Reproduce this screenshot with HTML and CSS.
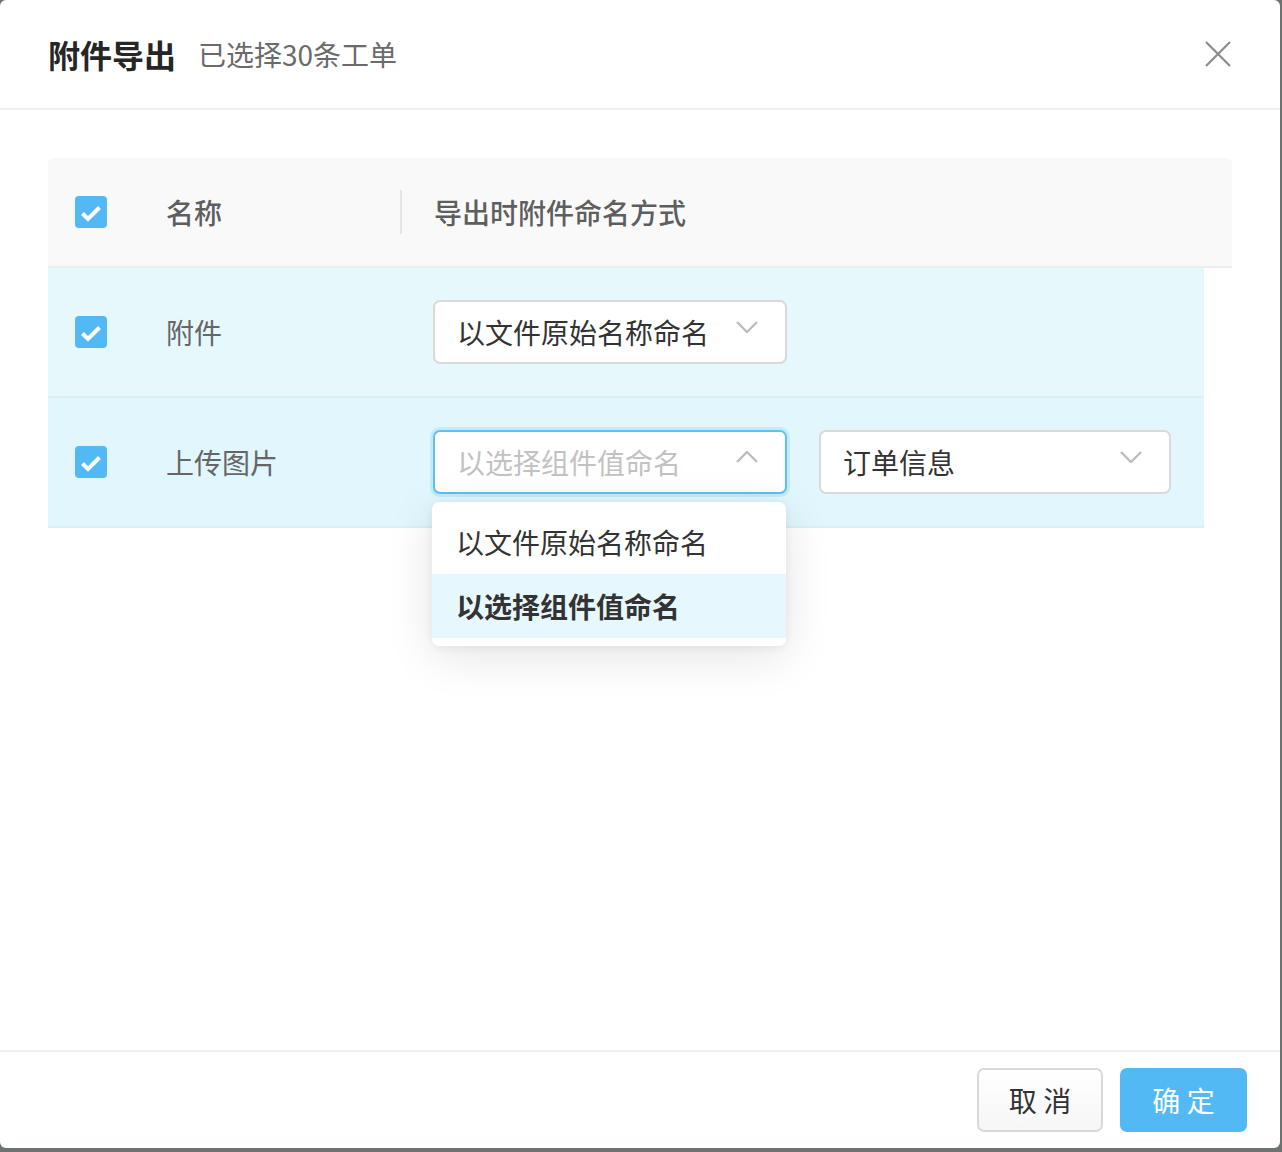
FILE: index.html
```html
<!DOCTYPE html>
<html lang="zh-CN">
<head>
<meta charset="utf-8">
<title>附件导出</title>
<link rel="stylesheet" href="styles.css">
</head>
<body>
<div class="modal">
  <div class="modal-header">
    <span class="modal-title">附件导出</span>
    <span class="modal-subtitle">已选择30条工单</span>
    <span class="modal-close" aria-label="关闭">
      <svg width="26" height="26" viewBox="0 0 26 26"><path d="M1 1 L25 25 M25 1 L1 25" stroke="#8c8c8c" stroke-width="2.2" fill="none"/></svg>
    </span>
  </div>
  <div class="modal-body">
    <div class="table">
      <div class="thead">
        <div class="c-check">
          <span class="checkbox"><svg width="32" height="32" viewBox="0 0 32 32"><polyline points="7.5,17.5 13,23 24.5,11.5" fill="none" stroke="#fff" stroke-width="4"/></svg></span>
        </div>
        <div class="c-name th-name">名称</div>
        <div class="c-mode th-mode">导出时附件命名方式</div>
      </div>
      <div class="row row-a">
        <div class="c-check">
          <span class="checkbox"><svg width="32" height="32" viewBox="0 0 32 32"><polyline points="7.5,17.5 13,23 24.5,11.5" fill="none" stroke="#fff" stroke-width="4"/></svg></span>
        </div>
        <div class="c-name">附件</div>
        <div class="c-mode">
          <div class="select">
            <span class="select-value">以文件原始名称命名</span>
            <svg class="chev" width="22" height="12" viewBox="0 0 22 12"><polyline points="1,1 11,11 21,1" fill="none" stroke="#bdbdbd" stroke-width="2.4"/></svg>
          </div>
        </div>
      </div>
      <div class="row row-b">
        <div class="c-check">
          <span class="checkbox"><svg width="32" height="32" viewBox="0 0 32 32"><polyline points="7.5,17.5 13,23 24.5,11.5" fill="none" stroke="#fff" stroke-width="4"/></svg></span>
        </div>
        <div class="c-name">上传图片</div>
        <div class="c-mode">
          <div class="select-wrap">
            <div class="select select-open">
              <span class="select-placeholder">以选择组件值命名</span>
              <svg class="chev" width="22" height="12" viewBox="0 0 22 12"><polyline points="1,11 11,1 21,11" fill="none" stroke="#bdbdbd" stroke-width="2.4"/></svg>
            </div>
            <ul class="dropdown">
              <li class="option">以文件原始名称命名</li>
              <li class="option option-active">以选择组件值命名</li>
            </ul>
          </div>
          <div class="select select-second">
            <span class="select-value">订单信息</span>
            <svg class="chev" width="22" height="12" viewBox="0 0 22 12"><polyline points="1,1 11,11 21,1" fill="none" stroke="#bdbdbd" stroke-width="2.4"/></svg>
          </div>
        </div>
      </div>
    </div>
  </div>
  <div class="modal-footer">
    <button class="btn btn-cancel">取 消</button>
    <button class="btn btn-ok">确 定</button>
  </div>
</div>
</body>
</html>
```
FILE: styles.css
```css
* { box-sizing: border-box; }

body {
  margin: 0;
  background: #6c7270;
  font-family: "Noto Sans CJK SC", "Noto Sans", "Liberation Sans", sans-serif;
  width: 1282px;
  height: 1152px;
  overflow: hidden;
}

.modal {
  width: 1280px;
  height: 1148px;
  background: #fff;
  border-radius: 6px;
  display: flex;
  flex-direction: column;
}

.modal-header {
  height: 110px;
  border-bottom: 2px solid #efefef;
  display: flex;
  align-items: center;
  padding: 0 48px;
}

.modal-title {
  font-size: 32px;
  font-weight: 700;
  color: #262626;
  line-height: 1;
}

.modal-subtitle {
  font-size: 28px;
  color: #6b6b6b;
  margin-left: 22px;
  line-height: 1;
}

.modal-close {
  margin-left: auto;
  margin-right: 1px;
  width: 26px;
  height: 26px;
  display: flex;
}

.modal-body {
  flex: 1;
  padding: 48px 48px 0;
}

.table {
  width: 1184px;
}

.thead {
  height: 110px;
  background: #f9f9f9;
  border-radius: 6px 6px 0 0;
  border-bottom: 2px solid #ececec;
  display: flex;
  align-items: center;
}

.c-check {
  width: 118px;
  padding-left: 27px;
  display: flex;
  align-items: center;
}

.c-name {
  width: 234px;
  font-size: 28px;
  color: #666;
  line-height: 1;
}

.th-name {
  font-weight: 500;
  color: #5e5e5e;
}

.c-mode {
  flex: 1;
  display: flex;
  align-items: center;
}

.th-mode {
  padding-left: 32px;
  font-size: 28px;
  font-weight: 500;
  color: #5e5e5e;
  line-height: 1;
  height: 44px;
  border-left: 2px solid #e6e6e6;
}

.checkbox {
  width: 32px;
  height: 32px;
  border-radius: 4px;
  background: #52b9f5;
  display: block;
}
.checkbox svg { display: block; }

.row {
  width: 1156px;
  height: 130px;
  display: flex;
  align-items: center;
  border-bottom: 2px solid #d8f0f6;
}
.row-a { background: #e7f8fd; }
.row-b { background: #e1f7fd; }

.row .c-mode { padding-left: 33px; }

.select-wrap {
  position: relative;
}

.select {
  width: 354px;
  height: 64px;
  border: 2px solid #d9d9d9;
  border-radius: 7px;
  background: #fff;
  display: flex;
  align-items: center;
  padding: 0 27px 0 22px;
  font-size: 28px;
  line-height: 1;
}

.select-value { color: #333; }
.select-placeholder { color: #c2c2c2; }

.chev {
  margin-left: auto;
  margin-top: -10px;
  display: block;
}

.select-open {
  border-color: #5cc1f3;
  box-shadow: 0 0 0 3px rgba(82, 185, 245, 0.2);
}

.select-second {
  margin-left: 32px;
  width: 352px;
}

.dropdown {
  position: absolute;
  left: -1px;
  top: 72px;
  width: 354px;
  margin: 0;
  padding: 8px 0;
  list-style: none;
  background: #fff;
  border-radius: 7px;
  box-shadow: 0 10px 48px rgba(0, 0, 0, 0.11), 0 2px 8px rgba(0, 0, 0, 0.06);
  z-index: 5;
}

.option {
  height: 64px;
  display: flex;
  align-items: center;
  padding-left: 24px;
  font-size: 28px;
  color: #333;
  line-height: 1;
}

.option-active {
  background: #e6f8fd;
  font-weight: 700;
}

.modal-footer {
  height: 98px;
  border-top: 2px solid #efefef;
  display: flex;
  justify-content: flex-end;
  align-items: center;
  padding: 0 33px 0 0;
  gap: 17px;
}

.btn {
  height: 64px;
  border-radius: 7px;
  font-family: inherit;
  font-size: 28px;
  line-height: 1;
  padding: 0;
  cursor: pointer;
}

.btn-cancel {
  width: 126px;
  border: 2px solid #d9d9d9;
  background: linear-gradient(#ffffff, #f6f6f6);
  color: #333;
}

.btn-ok {
  width: 127px;
  border: none;
  background: #52b9f5;
  color: #fff;
}
```
